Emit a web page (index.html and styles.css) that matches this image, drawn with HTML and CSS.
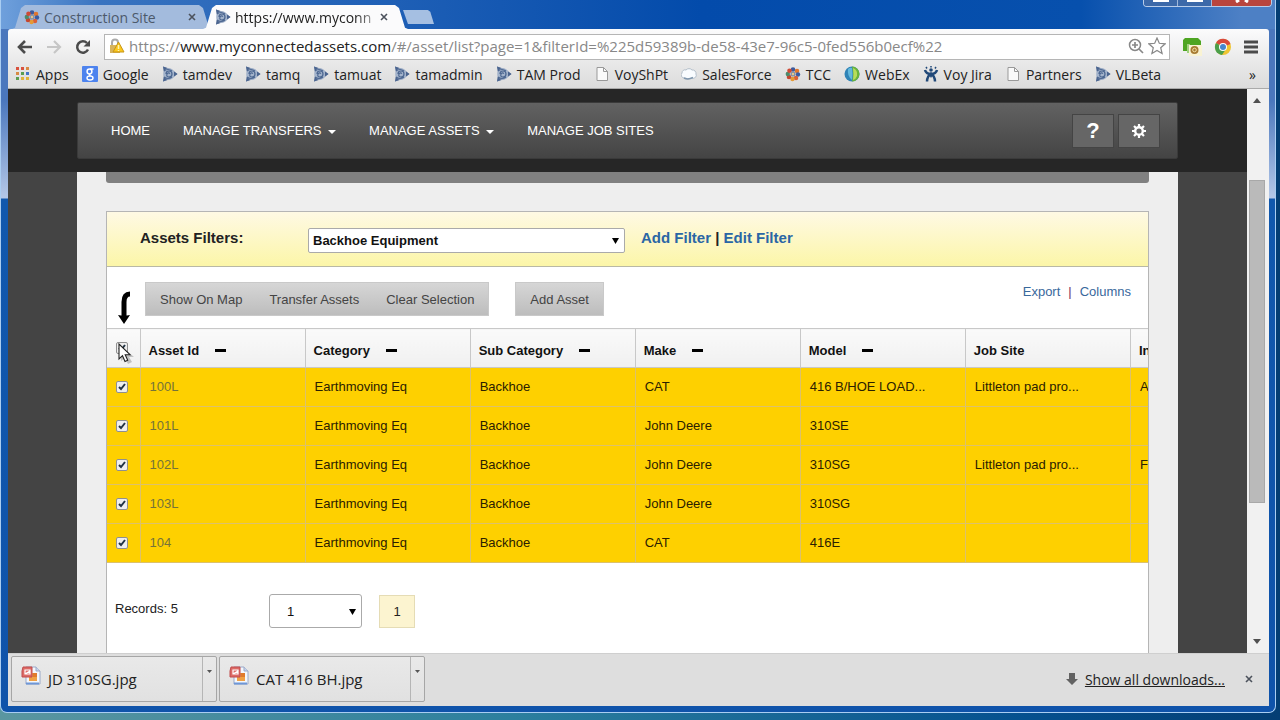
FILE: index.html
```
<!DOCTYPE html>
<html lang="en">
<head>
  <meta charset="UTF-8" />
  <meta name="viewport" content="width=device-width, initial-scale=1.0"/>
  <title>Connected Assets</title>
  <link rel="stylesheet" href="styles.css">
</head>

<body>

  <!-- Shared icons -->
  <svg class="defs" width="0" height="0" aria-hidden="true">
    <symbol id="globe" viewBox="0 0 16 16">
      <path d="M1 0.500L9 3 15.500 8 9 13 1 15.500 2 8z" fill="#7c8fae"/>
      <circle cx="7" cy="8" r="5.800" fill="#a3b3cb"/>
      <path d="M2 5q4-3 8 0M2 11q4 3 8 0M4 8q0-3 3-3t3 3q0 3-3 3t-2-3q1-2 3-.5" fill="none" stroke="#4c6791" stroke-width="1.200"/>
      <path d="M1 .5l4 1.500-3 3zM15.500 8l-3.500-2.500v5zM1 15.500L2 11l3 3z" fill="#4a648f"/>
    </symbol>
    <symbol id="flower" viewBox="0 0 16 16">
      <circle cx="8" cy="3.500" r="2.300" fill="#3d5a9c"/>
      <circle cx="12" cy="5" r="2.300" fill="#e0762e"/>
      <circle cx="13" cy="8.500" r="2.200" fill="#3b5ba0"/>
      <circle cx="11" cy="12" r="2.300" fill="#d9603a"/>
      <circle cx="7.500" cy="13" r="2.200" fill="#e59a35"/>
      <circle cx="4" cy="11" r="2.300" fill="#c5462f"/>
      <circle cx="2.800" cy="8" r="2.200" fill="#4c8a6b"/>
      <circle cx="4.500" cy="4.800" r="2.300" fill="#cf4a35"/>
      <circle cx="8" cy="8" r="2.600" fill="#8590a5"/>
      <circle cx="8" cy="8" r="1.200" fill="#e9c78b"/>
    </symbol>
    <symbol id="doc" viewBox="0 0 16 16">
      <path d="M3 1.500h6.500l4 4v9H3z" fill="#fafafa" stroke="#999"/>
      <path d="M9.500 1.500v4h4" fill="none" stroke="#999"/>
    </symbol>
    <symbol id="close" viewBox="0 0 8 8">
      <path d="M1 1l6 6M7 1L1 7" stroke="#4c525c" stroke-width="1.600"/>
    </symbol>
    <symbol id="picture" viewBox="0 0 20 20">
      <path d="M5 1h10l4 4v13H5z" fill="#f4f7fc" stroke="#9aa9c8"/>
      <path d="M15 1v4h4" fill="#c9d4ea" stroke="#9aa9c8"/>
      <path d="M8 7h8v8H8z" fill="#f0a044"/>
      <path d="M12 7h4v4h-4z" fill="#e07b2c"/>
      <path d="M5 17.500h13" stroke="#6f97d6" stroke-width="2"/>
      <path d="M2 1h9v10H1V5z" fill="#dd6a66" stroke="#c04c4c"/>
      <path d="M4 4h5v4H4zM4 8l5-3" fill="none" stroke="#fff" stroke-width="1.200"/>
    </symbol>
  </svg>

  <div class="window">
    <!-- Tabs -->
    <div class="tab-strip">
      <div class="tab">
        <svg class="icon"><use href="#flower"/></svg>
        <span class="tab-title">Construction Site</span>
        <button class="close" aria-label="Close tab"><svg><use href="#close"/></svg></button>
      </div>
      <div class="tab active">
        <svg class="icon"><use href="#globe"/></svg>
        <span class="tab-title">https://www.myconn</span>
        <button class="close" aria-label="Close tab"><svg><use href="#close"/></svg></button>
      </div>
      <button class="new-tab" aria-label="New tab"></button>
      <div class="window-buttons">
        <button aria-label="Minimize"><svg width="16" height="3"><path d="M0 0h16v2H0z" fill="#fff"/></svg></button>
        <button aria-label="Maximize"><svg width="16" height="3"><path d="M0 0h16v2H0z" fill="#fff"/></svg></button>
        <button class="quit" aria-label="Close"><svg width="14" height="3"><path d="M4 0L1 2M10 0l3 2" stroke="#fff" stroke-width="3"/></svg></button>
      </div>
    </div>

    <!-- Address bar -->
    <div class="toolbar">
      <button class="tool" aria-label="Back"><svg width="16" height="14"><path d="M8 1L2 7l6 6M2 7h13" fill="none" stroke="#4b4b4b" stroke-width="2.600"/></svg></button>
      <button class="tool" aria-label="Forward"><svg width="16" height="14"><path d="M8 1l6 6-6 6M14 7H1" fill="none" stroke="#c6c6c6" stroke-width="2.200"/></svg></button>
      <button class="tool" aria-label="Reload"><svg width="16" height="16"><path d="M13 10.500A5.700 5.700 0 1 1 12 4" fill="none" stroke="#4b4b4b" stroke-width="2.500"/><path d="M15 1v6.500H8.500z" fill="#4b4b4b"/></svg></button>
      <div class="address">
        <svg width="16" height="16"><path d="M3 8V4.500a3 3 0 0 1 6 0V7" fill="none" stroke="#aaa" stroke-width="2"/><path d="M1 7h10v8H1z" fill="#d8b45c"/><path d="M9.500 4l5.500 10H4z" fill="#fcc81c" stroke="#c79618" stroke-linejoin="round"/><path d="M9.500 7v4M9.500 12v1" stroke="#fff5b5" stroke-width="1.500"/></svg>
        <div class="url">https://<b>www.myconnectedassets.com</b>/#/asset/list?page=1&amp;filterId=%225d59389b-de58-43e7-96c5-0fed556b0ecf%22</div>
        <svg width="16" height="16"><circle cx="7" cy="7" r="5.500" fill="none" stroke="#888" stroke-width="1.500"/><path d="M4 7h6M7 4v6M11 11l4 4" stroke="#888" stroke-width="1.700"/></svg>
        <svg width="18" height="18"><path d="M9 1l2.300 5.300 5.900.5-4.500 3.900 1.400 5.800L9 13.400l-5.100 3.100 1.400-5.800L.8 6.800l5.900-.5z" fill="#fff" stroke="#888" stroke-width="1.200"/></svg>
      </div>
      <button class="tool" aria-label="Extension"><svg width="20" height="18"><path d="M3 0h13l3 3v6H1V2z" fill="#4ea522"/><path d="M1 8h5v5H1z" fill="#4ea522"/><path d="M5 6h3v9H5z" fill="#9fd07e"/><path d="M7 7h13v11H7z" fill="#f9f3d3"/><circle cx="12.500" cy="12" r="4" fill="#a77a31"/><circle cx="12.500" cy="12" r="1.800" fill="none" stroke="#f1dfa4"/></svg></button>
      <button class="tool" aria-label="Chrome"><svg width="18" height="18"><circle cx="9" cy="9" r="8" fill="#efc532"/><path d="M9 9L2 5a8 8 0 0 1 14.500 1z" fill="#d94a3b"/><path d="M9 9L2 5a8 8 0 0 0 6 12l4-6z" fill="#4c9f4b"/><circle cx="9" cy="9" r="4" fill="#fff"/><circle cx="9" cy="9" r="3" fill="#4686ce"/></svg></button>
      <button class="tool" aria-label="Menu"><svg width="14" height="14"><path d="M0 2h14M0 7h14M0 12h14" stroke="#4b4b4b" stroke-width="3"/></svg></button>
    </div>

    <!-- Bookmarks -->
    <div class="bookmarks">
      <nav>
        <a href="#"><svg class="icon" viewBox="0 0 16 16"><path d="M1 1h3v3H1zM6 1h3v3H6z" fill="#d9523d"/><path d="M11 1h3v3h-3zM1 6h3v3H1z" fill="#d78a44"/><path d="M6 6h3v3H6zM1 11h3v3H1z" fill="#5a9d52"/><path d="M11 6h3v3h-3z" fill="#4475c9"/><path d="M6 11h3v3H6zM11 11h3v3h-3z" fill="#e0b23c"/></svg>Apps</a>
        <a href="#"><svg class="icon" viewBox="0 0 16 16"><rect width="16" height="16" rx="1" fill="#4d83ee"/><circle cx="7.500" cy="5.500" r="2.400" fill="none" stroke="#fff" stroke-width="1.500"/><path d="M8 3h3.500M9 7.500q-3 1-.5 2.500" fill="none" stroke="#fff" stroke-width="1.300"/><ellipse cx="8" cy="12" rx="3" ry="2" fill="none" stroke="#fff" stroke-width="1.400"/></svg>Google</a>
        <a href="#"><svg class="icon"><use href="#globe"/></svg>tamdev</a>
        <a href="#"><svg class="icon"><use href="#globe"/></svg>tamq</a>
        <a href="#"><svg class="icon"><use href="#globe"/></svg>tamuat</a>
        <a href="#"><svg class="icon"><use href="#globe"/></svg>tamadmin</a>
        <a href="#"><svg class="icon"><use href="#globe"/></svg>TAM Prod</a>
        <a href="#"><svg class="icon"><use href="#doc"/></svg>VoyShPt</a>
        <a href="#"><svg class="icon" viewBox="0 0 16 16"><path d="M3 12a3 3 0 0 1-2-5 3 3 0 0 1 4-3 4 4 0 0 1 6 0 3.500 3.500 0 0 1 4 4 3 3 0 0 1-4 4q-4 2-8 0" fill="#f9fcff" stroke="#b4bfca"/><path d="M3 12q4 2 9-.5" fill="none" stroke="#8198ae" stroke-width="1.500"/></svg>SalesForce</a>
        <a href="#"><svg class="icon"><use href="#flower"/></svg>TCC</a>
        <a href="#"><svg class="icon" viewBox="0 0 16 16"><circle cx="8" cy="8" r="7.500" fill="#2f83b6"/><path d="M8 .5a7.500 7.500 0 0 1 0 15q2-7 0-15" fill="#6bb43a"/><path d="M9 2q5 2 4 8-1 3-4 4 1-6 0-12" fill="#b7dc5c"/><path d="M4 3q2-2 4-1 1 6 0 12-5-4-4-11" fill="#62b8dc"/></svg>WebEx</a>
        <a href="#"><svg class="icon" viewBox="0 0 16 16"><circle cx="8" cy="4" r="1.800" fill="#214979"/><path d="M3 1l1 1.500M8 0v1.500M13 1l-1 1.500" stroke="#214979" stroke-width="1.500"/><path d="M2 4q1 4 6 4t6-4M4 15.500q0-5 4-8 4 3 4 8" fill="none" stroke="#214979" stroke-width="2.500"/><path d="M5 7h6l-3 5z" fill="#214979"/></svg>Voy Jira</a>
        <a href="#"><svg class="icon"><use href="#doc"/></svg>Partners</a>
        <a href="#"><svg class="icon"><use href="#globe"/></svg>VLBeta</a>
      </nav>
      <button class="more" aria-label="More bookmarks">»</button>
    </div>

    <div class="viewport">
      <main class="page">
        <header class="header">
          <div class="navbar">
            <nav>
              <a href="#">HOME</a>
              <a href="#">MANAGE TRANSFERS <i class="caret"></i></a>
              <a href="#">MANAGE ASSETS <i class="caret"></i></a>
              <a href="#">MANAGE JOB SITES</a>
            </nav>
            <button class="square" aria-label="Help">?</button>
            <button class="square" aria-label="Settings"><svg width="14" height="14" viewBox="0 0 14 14"><circle cx="7" cy="7" r="3.800" fill="none" stroke="#fff" stroke-width="2.400"/><path d="M7 0v3M7 11v3M0 7h3M11 7h3M2 2l2 2M10 10l2 2M12 2l-2 2M4 10l-2 2" stroke="#fff" stroke-width="2.200"/></svg></button>
          </div>
        </header>

        <div class="content">
          <div class="strip"></div>
          <section class="panel">
            <div class="filters">
              <label for="filter">Assets Filters:</label>
              <select id="filter"><option>Backhoe Equipment</option></select>
              <div class="filter-links"><a href="#">Add Filter</a> | <a href="#">Edit Filter</a></div>
            </div>

            <div class="actions">
              <svg class="hint" width="14" height="34" viewBox="0 0 14 34"><path d="M13 3Q7 3 7 11v14" fill="none" stroke="#000" stroke-width="5"/><path d="M1 24q6 1 12 0L7 33z"/></svg>
              <div class="group">
                <button>Show On Map</button>
                <button>Transfer Assets</button>
                <button>Clear Selection</button>
              </div>
              <div class="group"><button>Add Asset</button></div>
              <div class="links"><a href="#">Export</a><span>|</span><a href="#">Columns</a></div>
            </div>

            <div class="grid">
              <table>
                <colgroup><col class="pick"><col><col><col><col><col><col><col></colgroup>
                <thead>
                  <tr>
                    <th><input type="checkbox" checked aria-label="Select all"><svg class="pointer" width="16" height="22" viewBox="0 0 16 22"><path d="M3 3v15l4-3 3 6 4-2-3-5h5z" fill="#0003"/><path d="M1 1v15l3.500-3.300L7 18.500l2.700-1.200-2.500-5.600H12z" fill="#fff" stroke="#222" stroke-width="1.100"/></svg></th>
                    <th>Asset Id<i class="dash"></i></th>
                    <th>Category<i class="dash"></i></th>
                    <th>Sub Category<i class="dash"></i></th>
                    <th>Make<i class="dash"></i></th>
                    <th>Model<i class="dash"></i></th>
                    <th>Job Site</th>
                    <th>In</th>
                  </tr>
                </thead>
                <tbody>
                  <tr>
                    <td><input type="checkbox" checked aria-label="Select 100L"></td>
                    <td><a href="#">100L</a></td><td>Earthmoving Eq</td><td>Backhoe</td><td>CAT</td><td>416 B/HOE LOAD...</td><td>Littleton pad pro...</td><td>A</td>
                  </tr>
                  <tr>
                    <td><input type="checkbox" checked aria-label="Select 101L"></td>
                    <td><a href="#">101L</a></td><td>Earthmoving Eq</td><td>Backhoe</td><td>John Deere</td><td>310SE</td><td></td><td></td>
                  </tr>
                  <tr>
                    <td><input type="checkbox" checked aria-label="Select 102L"></td>
                    <td><a href="#">102L</a></td><td>Earthmoving Eq</td><td>Backhoe</td><td>John Deere</td><td>310SG</td><td>Littleton pad pro...</td><td>F</td>
                  </tr>
                  <tr>
                    <td><input type="checkbox" checked aria-label="Select 103L"></td>
                    <td><a href="#">103L</a></td><td>Earthmoving Eq</td><td>Backhoe</td><td>John Deere</td><td>310SG</td><td></td><td></td>
                  </tr>
                  <tr>
                    <td><input type="checkbox" checked aria-label="Select 104"></td>
                    <td><a href="#">104</a></td><td>Earthmoving Eq</td><td>Backhoe</td><td>CAT</td><td>416E</td><td></td><td></td>
                  </tr>
                </tbody>
              </table>
            </div>

            <div class="pager">
              <span class="records">Records: 5</span>
              <select aria-label="Page"><option>1</option></select>
              <button class="current">1</button>
            </div>
          </section>
        </div>
      </main>

      <div class="scrollbar">
        <svg width="8" height="5"><path d="M4 0l4 5H0z" fill="#505050"/></svg>
        <div class="track"><div class="thumb"></div></div>
        <svg width="8" height="5"><path d="M0 0h8L4 5z" fill="#505050"/></svg>
      </div>
    </div>

    <!-- Downloads -->
    <footer class="downloads">
      <div class="download">
        <button class="file"><svg width="20" height="20"><use href="#picture"/></svg>JD 310SG.jpg</button>
        <button class="arrow" aria-label="Options"><svg width="5" height="3"><path d="M0 0h5L2.500 3z" fill="#555"/></svg></button>
      </div>
      <div class="download">
        <button class="file"><svg width="20" height="20"><use href="#picture"/></svg>CAT 416 BH.jpg</button>
        <button class="arrow" aria-label="Options"><svg width="5" height="3"><path d="M0 0h5L2.500 3z" fill="#555"/></svg></button>
      </div>
      <a class="show-all" href="#"><svg width="12" height="12"><path d="M3 0h6v6h3l-6 6-6-6h3z" fill="#626262"/></svg><span>Show all downloads...</span></a>
      <button class="close" aria-label="Close downloads"><svg><use href="#close"/></svg></button>
    </footer>
  </div>

</body>
</html>
```
FILE: styles.css
```
* {
  box-sizing: border-box;
}
body {
  margin: 0;
  height: 100vh;
  padding: 0 4px 7px 0;
  overflow: hidden;
  background: linear-gradient(90deg, #5a96a0, #2c7f9e 40%, #05508f 80%, #043e74);
  font-family: "Liberation Sans", Arial, sans-serif;
  font-size: 13px;
  color: #222;
}
button {
  border: 0;
  padding: 0;
  background: none;
  font: inherit;
  color: inherit;
}
a {
  text-decoration: none;
  color: #39689c;
}
svg {
  display: block;
  flex: none;
}
.defs {
  position: absolute;
}
.icon {
  width: 16px;
  height: 16px;
}
.window {
  height: 100%;
  display: flex;
  flex-direction: column;
  padding: 0 6px 6px 7px;
  border: 1px solid #a9cdf2;
  border-top: 0;
  border-radius: 0 0 7px 7px;
  background: linear-gradient(#4a77bd 0, #4a77bd 100px, #b5c8e8 198px, #1158ad 199px, #0f53aa);
}

/* Tabs */
.tab-strip {
  height: 29px;
  flex: none;
  display: flex;
  align-items: flex-end;
  margin: 0 -6px 0 -7px;
  padding-left: 11px;
  background: linear-gradient(90deg, #6fa0dc 0, #3873c0 100px, #1558b2 500px, #034bab 700px, #0750ad 1080px, #4d80c5 1240px);
  font-family: "Open Sans", sans-serif;
  font-size: 14px;
}
.tab {
  width: 200px;
  height: 24px;
  display: flex;
  align-items: center;
  gap: 4px;
  padding: 0 16px 0 12px;
  background: #a3bbdd;
  color: #4c596b;
  clip-path: polygon(0 100%, 3px 95%, 9px 12%, 13px 0, calc(100% - 13px) 0, calc(100% - 9px) 12%, calc(100% - 3px) 95%, 100% 100%);
}
.tab.active {
  width: 205px;
  margin-left: -9px;
  padding-right: 20px;
  background: #fbfbfc;
  color: #222;
}
.tab-title {
  flex: 1;
  overflow: hidden;
  white-space: nowrap;
}
.active .tab-title {
  -webkit-mask-image: linear-gradient(90deg, #000 85%, #0005);
}
.close svg {
  width: 8px;
  height: 8px;
}
.new-tab {
  width: 31px;
  height: 14px;
  margin: 0 0 5px -5px;
  background: #a5bfe2;
  clip-path: polygon(0 0, 80% 0, 88% 12%, 100% 100%, 16% 100%);
}
.window-buttons {
  display: flex;
  align-self: flex-start;
  margin-left: auto;
  margin-right: 3px;
  border: 1px solid #b9cde9;
  border-top: 0;
  border-radius: 0 0 4px 4px;
  overflow: hidden;
}
.window-buttons button {
  width: 34px;
  height: 6px;
  display: flex;
  justify-content: center;
  border-right: 1px solid #9fb8db;
  background: #3c69a9;
}
.window-buttons .quit {
  width: 59px;
  border: 0;
  background: #b9453d;
}

/* Address bar */
.toolbar {
  height: 33px;
  flex: none;
  display: flex;
  align-items: center;
  gap: 12px;
  padding: 2px 8px 0 9px;
  background: linear-gradient(#fbfbfc, #e9e9e9);
  border-radius: 3px 3px 0 0;
}
.tool {
  min-width: 17px;
}
.address {
  flex: 1;
  min-width: 0;
  height: 26px;
  display: flex;
  align-items: center;
  gap: 4px;
  padding: 0 3px 2px 4px;
  background: #fff;
  border: 1px solid #b5b5b5;
  font-family: "Open Sans", sans-serif;
  font-size: 15px;
  color: #888;
}
.url {
  flex: 1;
  overflow: hidden;
  white-space: nowrap;
}
.url b {
  font-weight: normal;
  color: #222;
}

/* Bookmarks */
.bookmarks {
  height: 27px;
  flex: none;
  display: flex;
  align-items: center;
  justify-content: space-between;
  padding: 0 13px 2px 7px;
  background: linear-gradient(#e9e9e9, #dcdcdc);
  border-bottom: 1px solid #aaa;
  font-family: "Open Sans", sans-serif;
  font-size: 14px;
}
.bookmarks nav {
  flex: 1;
  display: flex;
  justify-content: space-between;
  margin-right: 88px;
}
.bookmarks a {
  display: flex;
  align-items: center;
  gap: 5px;
  color: #222;
  white-space: nowrap;
}

/* Page */
.viewport {
  flex: 1;
  min-height: 0;
  display: flex;
}
.page {
  flex: 1;
  min-width: 0;
  display: flex;
  flex-direction: column;
  overflow: hidden;
  background: #444;
}
.header {
  flex: none;
  padding: 13px 0;
  background: #262626;
}
.navbar {
  max-width: 1101px;
  height: 57px;
  margin: 0 auto;
  display: flex;
  align-items: center;
  gap: 4px;
  padding: 0 17px 0 33px;
  background: linear-gradient(#626262, #444);
  border: 1px solid #3a3a3a;
  border-radius: 2px;
}
.navbar nav {
  flex: 1;
  display: flex;
  gap: 33px;
}
.navbar a {
  color: #fff;
}
.caret {
  display: inline-block;
  margin-left: 3px;
  vertical-align: 1px;
  border: 4px solid transparent;
  border-top-color: #fff;
  border-bottom: 0;
}
.square {
  width: 42px;
  height: 34px;
  display: flex;
  align-items: center;
  justify-content: center;
  background: #666;
  border: 1px solid #444;
  color: #fff;
  font-size: 22px;
  font-weight: bold;
}
.content {
  flex: 1;
  width: 100%;
  max-width: 1101px;
  margin: 0 auto;
  padding: 0 29px;
  display: flex;
  flex-direction: column;
  background: #eee;
}
.strip {
  height: 11px;
  flex: none;
  margin-bottom: 28px;
  background: #808080;
  border-radius: 0 0 3px 3px;
}
.panel {
  flex: 1;
  background: #fff;
  border: 1px solid #b5b5b5;
  border-bottom: 0;
}
.filters {
  height: 55px;
  display: flex;
  align-items: center;
  padding: 0 0 3px 33px;
  background: linear-gradient(#fef9e4, #fcf6a8);
  border-bottom: 1px solid #b9b9a5;
  font-size: 15px;
  font-weight: bold;
}
.filters label {
  width: 168px;
}
.filters select {
  width: 317px;
  height: 25px;
  margin-top: 5px;
  padding-left: 4px;
  font-size: 13px;
  font-weight: bold;
}
select {
  appearance: none;
  border: 1px solid #aaa;
  border-radius: 2px;
  color: #111;
  font-family: inherit;
  background: #fff url("data:image/svg+xml,%3Csvg xmlns='http://www.w3.org/2000/svg' width='7' height='7'%3E%3Cpath d='M0 1h7L3.500 7z'/%3E%3C/svg%3E") no-repeat right 5px center;
}
.filter-links {
  margin-left: 16px;
}
.filter-links a {
  color: #2a66a5;
}
.actions {
  height: 61px;
  display: flex;
  align-items: center;
  padding: 3px 17px 0 10px;
  color: #444;
}
.hint {
  margin: 18px 14px 0 0;
}
.group {
  display: flex;
  margin-right: 26px;
  background: linear-gradient(#d6d6d6, #bdbdbd);
  border: 1px solid #c9c9c9;
}
.group button {
  height: 32px;
  padding: 0 14px;
}
.group button + button {
  padding-left: 13px;
}
.links {
  display: flex;
  gap: 8px;
  margin: 0 0 16px auto;
}
.links span {
  color: #702b63;
}

/* Assets table */
.grid {
  overflow: hidden;
}
table {
  width: 1189px;
  table-layout: fixed;
  border-collapse: collapse;
}
.pick {
  width: 33px;
}
th, td {
  height: 39px;
  padding: 0 0 1px 9px;
  text-align: left;
  border: 1px solid #dcc16c;
  white-space: nowrap;
}
th {
  padding: 4px 0 0 8px;
  background: linear-gradient(#fafafa, #f0f0f0);
  border-color: #c8c8c8;
  color: #111;
}
th:first-child, td:first-child {
  border-left: 0;
  padding-left: 9px;
  position: relative;
}
td {
  background: #fed000;
  color: #2b2000;
}
td a {
  color: #75733a;
}
input[type="checkbox"] {
  appearance: none;
  display: block;
  width: 12px;
  height: 12px;
  margin: 0;
  border: 1px solid #8f8f8f;
  border-radius: 2px;
  background: #eee url("data:image/svg+xml,%3Csvg xmlns='http://www.w3.org/2000/svg' width='10' height='10'%3E%3Cpath d='M2 5l2 2 4-5' fill='none' stroke='%23234' stroke-width='2'/%3E%3C/svg%3E") center;
}
th input[type="checkbox"] {
  margin-bottom: 5px;
}
.pointer {
  position: absolute;
  left: 11px;
  top: 14px;
}
.dash {
  display: inline-block;
  width: 11px;
  height: 3px;
  margin-left: 16px;
  vertical-align: 3px;
  background: #000;
}
.pager {
  display: flex;
  align-items: center;
  padding: 31px 8px;
}
.records {
  width: 154px;
  margin-bottom: 5px;
}
.pager select {
  width: 93px;
  height: 34px;
  padding-left: 17px;
  font-size: 13px;
  border-radius: 3px;
}
.current {
  width: 36px;
  height: 33px;
  margin-left: 17px;
  background: #fcf4d0;
  border: 1px solid #e5dcb5;
}

/* Page scrollbar */
.scrollbar {
  width: 22px;
  flex: none;
  display: flex;
  flex-direction: column;
  align-items: center;
  padding: 9px 4px 9px 2px;
  background: #f1f1f1;
}
.track {
  flex: 1;
  width: 100%;
  padding: 77px 0 136px;
}
.thumb {
  height: 100%;
  background: #bababa;
  border: 1px solid #a8a8a8;
}

/* Downloads */
.downloads {
  height: 53px;
  flex: none;
  display: flex;
  align-items: center;
  gap: 2px;
  padding: 0 16px 2px 3px;
  background: #dedede;
  border-top: 1px solid #cfcfcf;
  font-family: "Open Sans", sans-serif;
  font-size: 15px;
}
.download {
  width: 206px;
  height: 46px;
  display: flex;
  background: linear-gradient(#e9e9e9, #e1e1e1);
  border: 1px solid #a6a6a6;
  border-radius: 2px;
}
.file {
  flex: 1;
  display: flex;
  align-items: center;
  gap: 7px;
  padding-left: 9px;
  border-right: 1px solid #b5b5b5;
}
.file svg {
  margin-bottom: 6px;
}
.arrow {
  width: 13px;
  padding: 0 4px 16px;
}
.show-all {
  display: flex;
  align-items: center;
  gap: 7px;
  margin-left: auto;
  color: #222;
  font-size: 14px;
}
.show-all span {
  text-decoration: underline;
}
.downloads > .close {
  margin-left: 18px;
}
```
